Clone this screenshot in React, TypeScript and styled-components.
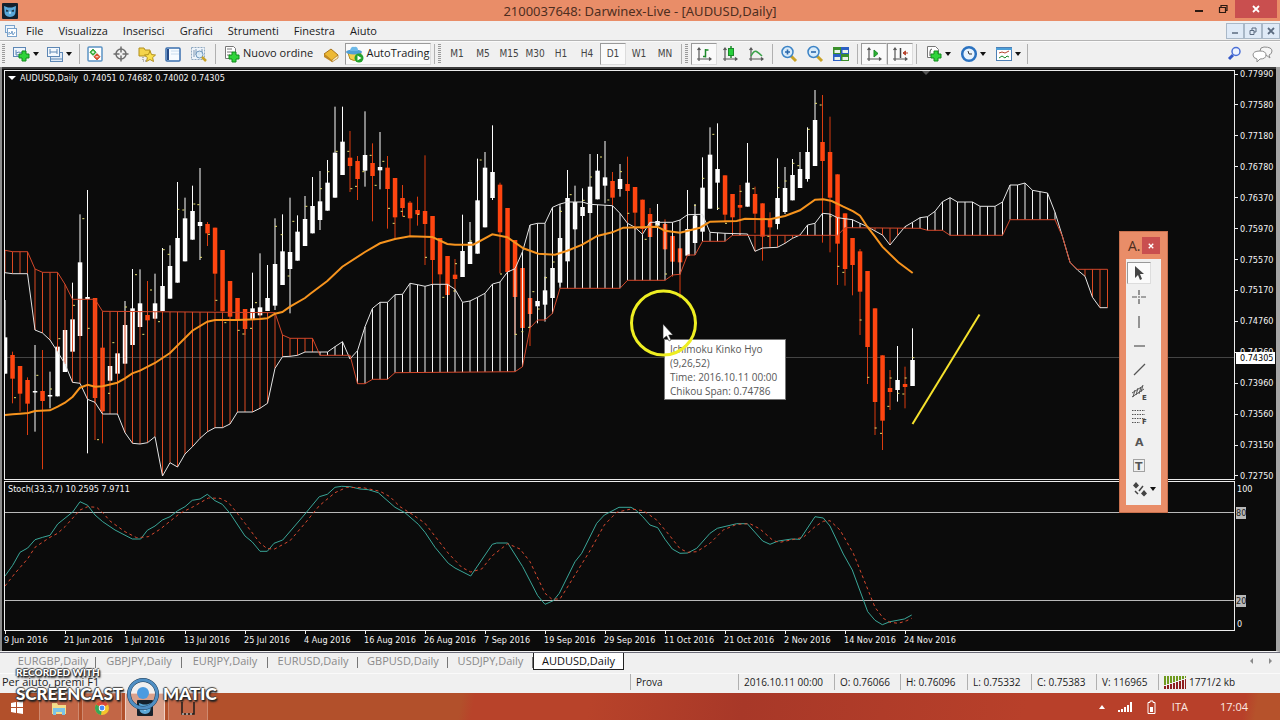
import React from "react";
import styled, { createGlobalStyle, css } from "styled-components";

const ui = `"Open Sans", "Noto Sans", sans-serif`;
const tiny = `"DejaVu Sans Condensed", "DejaVu Sans", sans-serif`;

const Global = createGlobalStyle`
  * { box-sizing: border-box; }
  body { margin: 0; background: #0b0b0b; font-family: ${ui}; }
  button { font-family: inherit; margin: 0; padding: 0; border: 0; background: none; color: inherit; }
  svg { display: block; }
`;

/* ---------- series, in thirds of a pixel, one bar every 7.5 px ---------- */

const STEP = 7.5;

// high, body top, body bottom, low, bull
const candles: [number, number, number, number, 0 | 1][] = [
  [630, 742, 851, 851, 1], [785, 795, 866, 940, 0], [828, 828, 911, 965, 0], [862, 870, 941, 1035, 0],
  [765, 903, 907, 1025, 1], [780, 903, 933, 1138, 0], [845, 915, 919, 955, 1], [770, 770, 919, 919, 1],
  [720, 720, 846, 846, 1], [578, 688, 785, 785, 1], [373, 517, 738, 738, 1], [300, 621, 627, 1090, 1],
  [624, 624, 924, 1050, 0], [773, 773, 964, 1060, 0], [828, 828, 872, 872, 1], [755, 790, 851, 851, 1],
  [633, 705, 821, 821, 1], [537, 655, 765, 765, 1], [538, 640, 711, 711, 1], [573, 675, 691, 691, 0],
  [551, 640, 686, 686, 1], [474, 588, 663, 663, 1], [466, 528, 626, 626, 1], [276, 444, 578, 578, 1],
  [323, 385, 514, 514, 1], [287, 363, 449, 449, 1], [234, 396, 408, 510, 1], [396, 402, 430, 468, 0],
  [413, 413, 551, 663, 0], [480, 480, 664, 664, 0], [573, 573, 680, 680, 0], [624, 624, 690, 690, 0],
  [657, 657, 717, 735, 0], [548, 655, 688, 688, 1], [490, 652, 676, 676, 1], [525, 624, 663, 663, 1],
  [385, 522, 647, 660, 1], [373, 484, 585, 585, 1], [323, 486, 537, 670, 1], [376, 425, 512, 512, 1],
  [318, 387, 468, 468, 1], [261, 348, 430, 430, 1], [243, 334, 390, 420, 1], [210, 278, 362, 362, 1],
  [50, 188, 323, 323, 1], [50, 155, 255, 255, 1], [123, 203, 228, 306, 0], [198, 213, 267, 330, 0],
  [64, 195, 242, 290, 1], [160, 219, 258, 394, 0], [126, 231, 241, 298, 1], [198, 233, 297, 416, 0],
  [264, 264, 382, 448, 0], [285, 324, 354, 380, 0], [333, 338, 385, 440, 0], [320, 360, 373, 407, 0],
  [196, 363, 402, 525, 0], [378, 378, 510, 585, 0], [444, 444, 553, 583, 0], [498, 498, 615, 628, 0],
  [507, 554, 567, 605, 0], [374, 483, 561, 561, 1], [396, 456, 522, 522, 1], [206, 331, 491, 491, 1],
  [186, 233, 412, 412, 1], [106, 246, 324, 330, 1], [278, 284, 427, 550, 0], [354, 354, 546, 546, 0],
  [450, 450, 621, 735, 0], [534, 534, 714, 720, 0], [624, 624, 672, 768, 0], [603, 633, 649, 700, 1],
  [560, 601, 644, 695, 1], [490, 534, 624, 670, 1], [350, 444, 578, 590, 1], [240, 324, 514, 514, 1],
  [287, 336, 418, 418, 1], [295, 351, 378, 378, 1], [192, 290, 369, 369, 1], [192, 242, 328, 328, 1],
  [153, 262, 287, 340, 1], [246, 273, 323, 345, 0], [222, 267, 297, 320, 1], [200, 282, 303, 400, 0],
  [291, 291, 368, 420, 0], [329, 329, 417, 430, 0], [354, 372, 441, 441, 0], [342, 393, 407, 407, 1],
  [388, 402, 478, 478, 0], [423, 438, 515, 560, 0], [475, 475, 517, 625, 0], [300, 417, 497, 497, 1],
  [342, 377, 459, 459, 1], [202, 293, 425, 425, 1], [112, 194, 356, 356, 1], [100, 237, 278, 360, 1],
  [256, 256, 374, 397, 0], [312, 312, 382, 430, 0], [285, 345, 353, 435, 0], [159, 278, 350, 350, 1],
  [290, 312, 371, 430, 0], [340, 340, 440, 512, 0], [367, 390, 412, 470, 0], [205, 324, 402, 418, 1],
  [231, 294, 366, 372, 1], [207, 255, 331, 331, 1], [186, 237, 294, 294, 1], [112, 186, 267, 275, 1],
  [0, 90, 228, 228, 1], [15, 156, 213, 458, 0], [80, 186, 323, 487, 0], [253, 253, 461, 585, 0],
  [370, 370, 537, 587, 0], [444, 444, 525, 616, 0], [477, 484, 605, 735, 0], [543, 543, 771, 882, 0],
  [655, 655, 936, 1035, 0], [796, 796, 992, 1080, 0], [840, 894, 906, 960, 0], [768, 870, 900, 935, 1],
  [830, 882, 891, 955, 0], [715, 810, 888, 888, 1],
];

type Pt = [number, number];

const spanA: Pt[] = [
  [0, 548], [1, 551], [3, 551], [4, 720], [5, 729], [6, 750], [7, 785], [8, 822], [9, 877], [10, 880], [11, 928],
  [12, 937], [13, 972], [15, 972], [16, 1028], [17, 1060], [18, 1062], [19, 1058], [20, 1040], [21, 1158],
  [22, 1118], [23, 1131], [24, 1092], [25, 1070], [26, 1045], [27, 1025], [28, 1013], [29, 1013], [30, 1002],
  [31, 966], [33, 966], [34, 955], [35, 940], [36, 835], [37, 800], [38, 799], [39, 796], [40, 786], [43, 786],
  [44, 770], [45, 755], [46, 807], [47, 782], [48, 710], [49, 655], [50, 637], [51, 637], [52, 614], [53, 613],
  [54, 580], [55, 584], [56, 589], [57, 583], [59, 583], [60, 598], [61, 637], [62, 633], [63, 622], [64, 610],
  [65, 582], [66, 576], [67, 546], [68, 536], [69, 485], [70, 405], [71, 400], [72, 400], [73, 352], [74, 342],
  [75, 336], [77, 336], [78, 343], [81, 347], [82, 370], [83, 400], [84, 412], [85, 433], [86, 397], [89, 397],
  [90, 390], [91, 374], [93, 373], [94, 427], [96, 430], [99, 432], [100, 484], [101, 474], [103, 472], [104, 460],
  [105, 445], [106, 435], [107, 405], [108, 400], [109, 370], [110, 372], [111, 383], [112, 386], [113, 389],
  [114, 400], [115, 410], [116, 423], [117, 435], [118, 465], [119, 437], [120, 410], [121, 397], [122, 383],
  [123, 380], [124, 364], [125, 335], [126, 323], [127, 336], [129, 336], [130, 349], [132, 349], [133, 336],
  [134, 285], [135, 285], [136, 279], [137, 301], [139, 309], [140, 367], [141, 440], [142, 517], [143, 540],
  [144, 559], [145, 622], [146, 653], [147, 653],
];

const spanB: Pt[] = [
  [0, 481], [1, 485], [3, 485], [4, 537], [5, 547], [7, 547], [8, 583], [9, 628], [12, 628], [13, 664], [36, 668],
  [37, 735], [38, 745], [41, 745], [42, 796], [46, 796], [47, 881], [48, 881], [49, 868], [51, 868], [52, 848],
  [68, 845], [69, 830], [70, 714], [71, 690], [72, 690], [73, 670], [74, 595], [82, 595], [83, 571], [88, 571],
  [89, 555], [90, 553], [91, 495], [92, 495], [93, 454], [96, 454], [97, 436], [111, 436], [112, 413], [122, 415],
  [123, 421], [125, 421], [126, 436], [133, 436], [134, 389], [140, 389], [141, 440], [142, 517], [143, 538],
  [147, 538],
];

const average: Pt[] = [
  [15, 975], [38, 973], [60, 971], [85, 969], [105, 963], [150, 961], [173, 950], [195, 938], [218, 920],
  [240, 893], [263, 884], [285, 890], [308, 889], [352, 878], [375, 865], [397, 850], [420, 842], [465, 819],
  [510, 789], [577, 722], [622, 695], [645, 690], [712, 690], [780, 687], [802, 685], [825, 671], [847, 666],
  [870, 650], [915, 624], [930, 612], [982, 573], [1027, 530], [1095, 486], [1140, 460], [1185, 447], [1230, 439],
  [1297, 441], [1342, 462], [1365, 464], [1420, 464], [1477, 433], [1522, 442], [1570, 475], [1615, 491],
  [1665, 494], [1702, 482], [1747, 464], [1792, 438], [1837, 427], [1870, 413], [1972, 410], [1995, 422],
  [2040, 428], [2100, 413], [2130, 395], [2210, 393], [2235, 386], [2310, 388], [2355, 378], [2400, 361],
  [2445, 329], [2470, 328], [2495, 333], [2530, 350], [2560, 364], [2580, 377], [2602, 410], [2625, 440],
  [2647, 470], [2695, 517], [2738, 549],
];

const lagging: Pt[] = [
  [45, 923], [112, 856], [153, 897], [178, 746], [222, 646], [250, 386], [266, 715], [294, 1049], [327, 910],
  [340, 758], [378, 651], [408, 554], [430, 733], [453, 600], [477, 695], [491, 479], [506, 493], [535, 358],
  [550, 360], [583, 342], [595, 344], [603, 502], [627, 433], [649, 631], [676, 698], [716, 721], [730, 732],
  [753, 715], [768, 638], [828, 409], [845, 434], [866, 558], [880, 394], [919, 349], [963, 296], [985, 245],
  [1010, 184], [1045, 184], [1054, 296], [1068, 289], [1090, 245], [1112, 196], [1127, 286], [1150, 214],
  [1167, 355], [1181, 400], [1205, 364], [1212, 379], [1255, 373], [1278, 502], [1330, 622], [1368, 521],
  [1363, 603], [1413, 453], [1442, 210], [1503, 552], [1548, 733], [1567, 725], [1587, 712], [1600, 605],
  [1616, 657], [1638, 563], [1661, 516], [1683, 364], [1712, 314], [1751, 331], [1773, 261], [1803, 201],
  [1825, 330], [1863, 245], [1885, 370], [1937, 448], [1970, 405], [1998, 552], [2085, 346], [2110, 265],
  [2140, 133], [2155, 355], [2178, 400], [2222, 304], [2260, 296], [2305, 439], [2335, 293], [2357, 273],
  [2380, 220], [2395, 227], [2426, 118], [2448, 40], [2462, 45], [2492, 380], [2515, 529], [2530, 547],
  [2582, 690], [2605, 862], [2627, 1014], [2643, 1030], [2672, 864], [2665, 949], [2695, 910], [2717, 864],
  [2710, 912], [2740, 803],
];

const stochMain: Pt[] = [
  [15, 288], [38, 256], [60, 217], [83, 204], [105, 179], [128, 172], [150, 166], [173, 132], [218, 96], [240, 65],
  [263, 76], [285, 105], [308, 125], [345, 150], [397, 177], [422, 177], [442, 151], [465, 138], [487, 120],
  [510, 110], [533, 92], [555, 80], [577, 61], [600, 57], [622, 43], [645, 62], [667, 73], [690, 100], [735, 168],
  [757, 186], [780, 214], [802, 214], [822, 190], [848, 180], [915, 102], [958, 50], [982, 43], [1005, 22],
  [1025, 19], [1050, 20], [1080, 27], [1105, 29], [1135, 38], [1185, 82], [1215, 98], [1255, 133], [1275, 157],
  [1305, 202], [1345, 250], [1365, 264], [1412, 288], [1477, 193], [1490, 189], [1523, 189], [1568, 260],
  [1613, 347], [1635, 373], [1660, 362], [1678, 340], [1725, 245], [1745, 220], [1790, 130], [1813, 105],
  [1857, 82], [1893, 82], [1907, 90], [1928, 110], [1950, 135], [1973, 143], [1995, 178], [2017, 207],
  [2040, 220], [2063, 219], [2090, 205], [2130, 160], [2152, 145], [2210, 131], [2242, 131], [2288, 183],
  [2310, 193], [2335, 183], [2375, 177], [2400, 178], [2445, 110], [2470, 114], [2490, 138], [2530, 222],
  [2557, 270], [2603, 395], [2625, 421], [2647, 434], [2670, 425], [2713, 417], [2735, 405],
];

const stochSignal: Pt[] = [
  [15, 318], [45, 280], [83, 236], [105, 202], [150, 172], [173, 160], [195, 140], [240, 90], [263, 80], [290, 82],
  [310, 100], [330, 123], [375, 155], [410, 173], [445, 170], [480, 148], [540, 100], [580, 80], [625, 54],
  [660, 55], [685, 67], [712, 100], [735, 130], [780, 189], [800, 205], [822, 208], [870, 182], [915, 130],
  [958, 77], [1005, 38], [1040, 22], [1090, 23], [1140, 34], [1170, 50], [1200, 80], [1240, 105], [1275, 130],
  [1345, 220], [1385, 262], [1412, 276], [1445, 267], [1477, 227], [1523, 191], [1560, 207], [1590, 245],
  [1635, 340], [1655, 357], [1680, 357], [1725, 285], [1770, 212], [1813, 135], [1850, 97], [1893, 87],
  [1930, 92], [1970, 120], [2010, 168], [2040, 206], [2063, 217], [2090, 215], [2130, 190], [2170, 150],
  [2210, 133], [2250, 131], [2280, 147], [2320, 182], [2340, 187], [2410, 172], [2445, 140], [2470, 124],
  [2490, 122], [2520, 150], [2560, 220], [2600, 320], [2625, 382], [2650, 415], [2670, 427], [2695, 430],
  [2720, 422], [2735, 415],
];

const priceY = (v: number) => 19 + v / 3;
const stochY = (v: number) => v / 3 - 2;
const timeX = (v: number) => v / 3 - 5;

const path = (pts: Pt[], fx: (v: number) => number, fy: (v: number) => number) =>
  pts.map(([a, b]) => `${fx(a).toFixed(1)},${fy(b).toFixed(1)}`).join(" ");

const at = (pts: Pt[], i: number) => {
  for (let k = 1; k < pts.length; k++) {
    const [x0, y0] = pts[k - 1];
    const [x1, y1] = pts[k];
    if (i <= x1) return y0 + ((y1 - y0) * (i - x0)) / (x1 - x0);
  }
  return pts[pts.length - 1][1];
};

const bars = Array.from({ length: 148 }, (_, i) => i);

/* ---------- window chrome ---------- */

const Window = styled.div`
  min-height: 100vh;
  display: flex;
  flex-direction: column;
  position: relative;
  overflow: hidden;
  background: #f0f0f0;
  color: #1b1b1b;
`;

const TitleBar = styled.header`
  height: 21px;
  display: grid;
  grid-template-columns: 1fr auto 1fr;
  align-items: start;
  background: #e98d68;
`;

const Logo = styled.div`
  padding: 3px 2px;
`;

const Title = styled.h1`
  margin: 0;
  font-family: "Noto Sans", sans-serif;
  font-size: 13px;
  line-height: 22px;
  font-weight: 400;
  color: #4e2d1f;
`;

const WindowButtons = styled.div`
  display: flex;
  justify-content: flex-end;
  padding-right: 3px;
`;

const WindowButton = styled.button<{ $danger?: boolean }>`
  width: ${(p) => (p.$danger ? 42 : 24)}px;
  height: 18px;
  display: grid;
  place-items: center;
  background: ${(p) => (p.$danger ? "#c94f4f" : "transparent")};
`;

const MenuBar = styled.nav`
  height: 20px;
  display: flex;
  align-items: center;
  gap: 15px;
  padding-left: 4px;
  border-bottom: 1px solid #b4b4b4;
  font-size: 11px;
`;

const MenuItem = styled.button`
  line-height: 18px;
  font-size: 11px;
  white-space: nowrap;
`;

const MenuIcon = styled.span`
  width: 14px;
  margin-right: -7px;
`;

const MdiButtons = styled.div`
  margin-left: auto;
  display: flex;
`;

const MdiButton = styled.button`
  width: 18px;
  height: 16px;
  display: grid;
  place-items: center;
  background: #dfeaf7;
  border: 1px solid #a9b8c8;
`;

const Toolbar = styled.div`
  height: 26px;
  display: flex;
  align-items: center;
  padding: 0 3px 1px 2px;
  border-top: 1px solid #fafafa;
`;

const Grip = styled.span`
  width: 3px;
  height: 20px;
  margin-right: 3px;
  flex: none;
  background: repeating-linear-gradient(#9a9a9a 0 1px, #f0f0f0 1px 2px);
`;

const Divider = styled.span<{ $gap?: number }>`
  width: 1px;
  height: 20px;
  flex: none;
  margin: 0 ${(p) => p.$gap ?? 2}px;
  background: #b0b0b0;
`;

const Tool = styled.button<{ $pressed?: boolean; $w?: number }>`
  width: ${(p) => p.$w ?? 26}px;
  height: 22px;
  flex: none;
  display: flex;
  align-items: center;
  justify-content: center;
  gap: 2px;
  font-size: 11px;
  line-height: 18px;
  white-space: nowrap;
  ${(p) =>
    p.$pressed &&
    css`
      background: #fafafa;
      border: 1px solid #dcdcdc;
      border-top-color: #9a9a9a;
      border-left-color: #9a9a9a;
    `}
`;

const ToolText = styled.span`
  padding-bottom: 2px;
`;

const Period = styled(Tool)`
  font-family: ${tiny};
  font-size: 10px;
  color: #444;
`;

const Caret = styled.span`
  border: 3px solid transparent;
  border-top: 4px solid #111;
  border-bottom: 0;
`;

const Spacer = styled.span`
  flex: 1;
`;

/* ---------- chart ---------- */

const ChartWindow = styled.main`
  flex: 1;
  display: grid;
  grid-template-columns: 1fr 40px;
  padding: 0 1px 1px 4px;
  border-right: 4px solid #a5a5a5;
  border-bottom: 1px solid #f4f4f4;
  background: #0b0b0b;
  box-shadow: inset 3px 0 0 -1px #8b8b8b, inset 0 2px 0 #3c3c3c;
  font-family: ${tiny};
  font-size: 9px;
  line-height: 12px;
  color: #f4f4f4;
`;

const Panes = styled.div`
  min-width: 0;
  padding-top: 3px;
`;

const Pane = styled.section<{ $h: number }>`
  height: ${(p) => p.$h}px;
  margin-bottom: 1px;
  border: 1px solid #ececec;
  position: relative;
  overflow: hidden;
`;

const Plot = styled.svg`
  width: 100%;
  height: 100%;
`;

const PaneTitle = styled.div`
  position: absolute;
  top: 1px;
  left: 3px;
  display: flex;
  align-items: center;
  gap: 4px;
  white-space: pre;
`;

const TitleCaret = styled.span`
  border: 4px solid transparent;
  border-top: 4px solid #fff;
  border-bottom: 0;
`;

const TimeAxis = styled.div`
  display: flex;
  height: 18px;
`;

const TimeLabel = styled.div`
  width: 60px;
  flex: none;
  white-space: nowrap;
  &::before {
    content: "";
    display: block;
    width: 1px;
    height: 3px;
    margin: -1px 0 0 1px;
    background: #eee;
  }
`;

const Axis = styled.aside`
  position: relative;
  padding-top: 1px;
`;

const Prices = styled.div`
  height: 414px;
  display: flex;
  flex-direction: column;
  justify-content: space-between;
`;

const Price = styled.div`
  display: flex;
  align-items: center;
  gap: 2px;
  &::before {
    content: "";
    width: 3px;
    height: 1px;
    background: #eee;
  }
`;

const CurrentPrice = styled.div`
  position: absolute;
  top: 285px;
  left: 1px;
  right: 0;
  padding-left: 4px;
  background: #fff;
  color: #000;
`;

const Levels = styled.div`
  display: flex;
  flex-direction: column;
  align-items: flex-start;
  padding: 1px 0 0 1px;
`;

const Level = styled.div<{ $boxed?: boolean; $gap?: number }>`
  margin-top: ${(p) => p.$gap ?? 0}px;
  padding: 0 1px;
  height: 12px;
  ${(p) => p.$boxed && "background: #b9b9b9; color: #222; padding: 0;"}
`;

/* ---------- bottom bars ---------- */

const Tabs = styled.div`
  height: 21px;
  display: flex;
  align-items: flex-start;
  padding-left: 10px;
  border-top: 1px solid #6c6c78;
`;

const Tab = styled.button<{ $active?: boolean; $w: number }>`
  width: ${(p) => p.$w}px;
  height: 17px;
  line-height: 14px;
  padding-bottom: 1px;
  font-size: 11px;
  color: ${(p) => (p.$active ? "#111" : "#8a8a8a")};
  ${(p) =>
    p.$active
      ? "background: #fff; border: 1px solid #222; border-top: 0;"
      : "background: linear-gradient(#777, #777) right 4px / 1px 11px no-repeat;"}
`;

const TabArrows = styled.div`
  margin-left: auto;
  display: flex;
  gap: 12px;
  padding: 4px 5px 0 0;
`;

const ArrowButton = styled.button`
  width: 7px;
  height: 8px;
`;

const StatusBar = styled.footer`
  height: 20px;
  display: flex;
  align-items: center;
  padding: 0 0 3px 2px;
  font-size: 11px;
  line-height: 16px;
  border-top: 1px solid #fafafa;
`;

const Help = styled.span`
  flex: 1;
`;

const Cell = styled.span<{ $w: number }>`
  width: ${(p) => p.$w}px;
  flex: none;
  display: flex;
  align-items: center;
  gap: 3px;
  padding-left: 5px;
  border-left: 1px solid #b0b0b0;
  white-space: nowrap;
  font-size: 10px;
`;

const Taskbar = styled.div`
  height: 28px;
  display: flex;
  align-items: stretch;
  gap: 3px;
  padding: 0 32px 0 10px;
  color: #fbe9e2;
  background: linear-gradient(100deg, #b2502b 0 36%, #b8432a 37% 46%, #a83828 58%, #b8402a 80%, #b8402a 97%, #b6522b 98%);
`;

const StartButton = styled.button`
  width: 26px;
  display: grid;
  place-items: center start;
`;

const TaskButton = styled.button<{ $active?: boolean }>`
  width: 40px;
  display: grid;
  place-items: center;
  background: ${(p) => (p.$active ? "#d9a18c" : "#c26646")};
  border: 1px solid ${(p) => (p.$active ? "#f0d0c4" : "#cf8a70")};
  border-bottom: 0;
`;

const Tray = styled.div`
  margin-left: auto;
  display: flex;
  align-items: center;
  padding-bottom: 1px;
  font-size: 11px;
`;

const TrayItem = styled.span<{ $gap: number }>`
  margin-left: ${(p) => p.$gap}px;
`;

/* ---------- floating items ---------- */

const Tooltip = styled.div`
  position: absolute;
  left: 664px;
  top: 339px;
  width: 122px;
  padding: 2px 0 1px 5px;
  background: #fff;
  border: 1px solid #767676;
  color: #575757;
  font-size: 10px;
  line-height: 14px;
  white-space: nowrap;
`;

const Pointer = styled.svg`
  position: absolute;
  left: 628px;
  top: 287px;
`;

const Palette = styled.section`
  position: absolute;
  right: 112px;
  top: 231px;
  width: 49px;
  padding: 5px 6px 7px;
  background: #e98d68;
  border: 1px solid #c9714e;
`;

const PaletteHead = styled.div`
  display: flex;
  justify-content: space-between;
  align-items: center;
  height: 17px;
  margin-bottom: 5px;
  padding: 0 1px 0 2px;
  font-size: 14px;
  color: #4e2d1f;
`;

const PaletteClose = styled.button`
  width: 18px;
  height: 17px;
  display: grid;
  place-items: center;
  background: #c94f4f;
`;

const PaletteBody = styled.div`
  height: 246px;
  display: flex;
  flex-direction: column;
  gap: 2px;
  padding: 3px 1px 1px;
  background: #f0f0f0;
`;

const PaletteTool = styled.button<{ $pressed?: boolean }>`
  width: ${(p) => (p.$pressed ? 24 : 33)}px;
  height: 22px;
  padding-left: 3px;
  display: flex;
  align-items: center;
  gap: 2px;
  ${(p) => p.$pressed && "background: #fbfbfb; border: 1px solid #ddd; border-top-color: #999; border-left-color: #999; padding-left: 2px;"}
`;

const Watermark = styled.div`
  position: absolute;
  left: 16px;
  bottom: 11px;
  color: #fff;
  font-family: Lato, sans-serif;
  font-weight: 900;
  text-shadow: 1px 1px 1px #222, -1px 0 1px #444, 0 -1px 1px #444, 1px 2px 2px #222;
`;

const MarkTop = styled.div`
  font-size: 10px;
  line-height: 12px;
`;

const MarkRow = styled.div`
  display: flex;
  align-items: center;
  gap: 4px;
  height: 32px;
  font-size: 17px;
  line-height: 18px;
`;

/* ---------- drawings ---------- */

const Icon = ({ children, w = 18, h = 18 }: { children: React.ReactNode; w?: number; h?: number }) => (
  <svg width={w} height={h} viewBox={`0 0 ${w} ${h}`} fill="none" aria-hidden="true">
    {children}
  </svg>
);

const Plus = ({ x, y }: { x: number; y: number }) => (
  <path
    d={`M${x + 3} ${y}h4v3h3v4h-3v3h-4v-3h-3v-4h3z`}
    fill="#2fd43a"
    stroke="#128a1c"
    strokeWidth="1"
  />
);

const NewChart = () => (
  <Icon w={20}>
    <rect x="2.5" y="2.5" width="12" height="9" fill="#eef5fc" stroke="#5d87b5" />
    <path d="M5 5v5h7M5 8l3-1 2 1 3-2" stroke="#5d87b5" />
    <Plus x={8} y={6} />
  </Icon>
);
const Profiles = () => (
  <Icon>
    <rect x="4.5" y="7.5" width="12" height="9" fill="#dfeaf6" stroke="#5d87b5" />
    <path d="M4 14h13" stroke="#5d87b5" />
    <rect x="1.5" y="2.5" width="12" height="9" fill="#f4f9fe" stroke="#5d87b5" />
    <path d="M4 4v5M11 4v5M4 7h7" stroke="#5d87b5" />
  </Icon>
);
const MarketWatch = () => (
  <Icon>
    <rect x="2" y="2" width="14" height="14" rx="1" fill="#fff" stroke="#5b93c4" strokeWidth="1.5" />
    <path d="M7 4l3.200 3.200L7 10.400 3.800 7.200z" fill="#27b32d" stroke="#187a1e" strokeWidth=".6" />
    <path d="M11 8.600l3.200 3.200L11 15l-3.200-3.200z" fill="#e2512a" stroke="#a83317" strokeWidth=".6" />
    <path d="M7 5.800v2.800M5.600 7.200h2.800M9.600 11.800h2.800" stroke="#fff" />
  </Icon>
);
const Crosshair = () => (
  <Icon>
    <circle cx="9" cy="9" r="5" stroke="#6d6d6d" strokeWidth="1.5" />
    <path d="M9 1.500v6M9 10.500v6M1.500 9h6M10.500 9h6" stroke="#6d6d6d" strokeWidth="1.5" />
  </Icon>
);
const Navigator = () => (
  <Icon>
    <path d="M1 3h5l1 2h5v6H1z" fill="#f4d44c" stroke="#b18f1c" />
    <path d="M5 12v4h4" stroke="#777" strokeDasharray="1 1" />
    <path d="M12 6l1.600 3.600 3.900.4-2.900 2.600.9 3.900-3.500-2-3.500 2 .9-3.900-2.900-2.600 3.900-.4z" fill="#fbe04e" stroke="#b18f1c" />
  </Icon>
);
const Terminal = () => (
  <Icon>
    <rect x="2" y="3" width="14" height="13" rx="1" fill="#f7fbff" stroke="#3a6fae" strokeWidth="1.5" />
    <path d="M4 4v11" stroke="#244a86" strokeWidth="2" />
    <path d="M7 6h8M7 9h8" stroke="#c9dcee" />
  </Icon>
);
const Tester = () => (
  <Icon>
    <rect x="1.5" y="2.5" width="13" height="12" fill="#eef4fa" stroke="#8fa8c0" strokeDasharray="2 1" />
    <path d="M4 5v7M6 4v6M9 6v4M12 4v5" stroke="#7d97b3" />
    <circle cx="9.5" cy="9.5" r="3.5" fill="#dcecf8" fillOpacity=".8" stroke="#6d96bd" />
    <path d="M12 12l4 4" stroke="#c9a227" strokeWidth="2.5" />
  </Icon>
);
const NewOrder = () => (
  <Icon>
    <path d="M2.500 1.500h8l2 2v10h-10z" fill="#fff" stroke="#777" />
    <path d="M4 4h5M4 7h5M4 10h3" stroke="#777" />
    <Plus x={6} y={7} />
  </Icon>
);
const MetaEditor = () => (
  <Icon>
    <path d="M2 9l7-5 7 6-6 6z" fill="#edb934" stroke="#a9741b" />
    <path d="M2 9v3l8 5v-2z" fill="#c28a22" />
    <path d="M10 15l6-5v3l-6 4z" fill="#fff2c5" stroke="#a9741b" strokeWidth=".7" />
  </Icon>
);
const AutoTrade = () => (
  <Icon>
    <path d="M2 8h13l-2 6q-5 3-9 0z" fill="#f3cf4c" stroke="#b38d22" />
    <ellipse cx="8" cy="7" rx="8" ry="2.5" fill="#4f9fd6" />
    <path d="M4 6q1-5 4-4 4-1 4 4z" fill="#6db9e8" />
    <circle cx="13" cy="13" r="4.5" fill="#22a32c" />
    <path d="M11.500 10.500l4 2.500-4 2.500z" fill="#fff" />
  </Icon>
);

const AxesBase = () => (
  <path d="M4 3v13M2 14h14M2.500 5L4 3l1.500 2M14 12.500l2 1.500-2 1.500" stroke="#555" strokeWidth="1.2" />
);
const BarChart = () => (
  <Icon>
    <AxesBase />
    <path d="M10.500 4v8.500M10.500 11.500H8M10.500 5h3" stroke="#1c8a2a" strokeWidth="1.5" />
  </Icon>
);
const CandleChart = () => (
  <Icon>
    <AxesBase />
    <path d="M10 1v12" stroke="#1c8a2a" strokeWidth="1.5" />
    <rect x="7.5" y="3.5" width="5" height="7" fill="#27cf3c" stroke="#1c8a2a" />
  </Icon>
);
const LineChart = () => (
  <Icon>
    <AxesBase />
    <path d="M4 11q3-6 5.500-4.500T15 11" stroke="#3aa24a" strokeWidth="1.5" />
  </Icon>
);
const Zoom = ({ minus }: { minus?: boolean }) => (
  <Icon>
    <path d="M11 11l5 5" stroke="#c9a227" strokeWidth="3" />
    <circle cx="7.5" cy="7" r="5.5" fill="#d8ebfa" stroke="#3d84c6" strokeWidth="1.5" />
    <path d={minus ? "M5 7h5" : "M5 7h5M7.500 4.500v5"} stroke="#2a68ac" strokeWidth="1.6" />
  </Icon>
);
const Tile = () => (
  <Icon>
    <rect x="1" y="2" width="8" height="7" fill="#3a8f2b" />
    <rect x="9" y="2" width="8" height="7" fill="#2b5fc4" />
    <rect x="1" y="9" width="8" height="7" fill="#2b5fc4" />
    <rect x="9" y="9" width="8" height="7" fill="#3a8f2b" />
    <path d="M2.500 5H8v3H2.500zM10.500 5H16v3h-5.500zM2.500 12H8v3H2.500zM10.500 12H16v3h-5.500z" fill="#eaf3ea" />
  </Icon>
);
const AutoScroll = () => (
  <Icon>
    <AxesBase />
    <path d="M9 5l4 3.500L9 12z" fill="#27b32d" stroke="#1c8a2a" />
  </Icon>
);
const ChartShift = () => (
  <Icon>
    <AxesBase />
    <path d="M9.500 3v10" stroke="#444" strokeWidth="1.5" />
    <path d="M12 8h5M14.500 6v4l-2.500-2z" stroke="#b7442f" fill="#b7442f" />
  </Icon>
);
const Indicators = () => (
  <Icon>
    <path d="M2.500 1.500h8l3 3v8h-11z" fill="#fff" stroke="#777" />
    <path d="M7 4q-2 0-2 3v4" stroke="#555" />
    <Plus x={6} y={6} />
  </Icon>
);
const Clock = () => (
  <Icon>
    <circle cx="9" cy="9" r="6.8" fill="#e9f4fd" stroke="#2b72c0" strokeWidth="2.5" />
    <path d="M8 6l1 3h3" stroke="#333" />
  </Icon>
);
const Templates = () => (
  <Icon>
    <rect x="1.5" y="2.5" width="15" height="13" fill="#fff" stroke="#4d7fb5" />
    <path d="M1 4h16" stroke="#4d9fd8" strokeWidth="2" />
    <path d="M4 8l3-1 3 1 4-2" stroke="#b7442f" />
    <path d="M4 13l3-2 3 2 2-2 2 1" stroke="#1c8a2a" />
  </Icon>
);
const Search = () => (
  <Icon>
    <path d="M3 14l4-4" stroke="#3559c9" strokeWidth="3" />
    <circle cx="10" cy="6.5" r="4" fill="#eef4ff" stroke="#4a6fd6" strokeWidth="1.5" />
  </Icon>
);
const Chat = () => (
  <Icon w={22}>
    <path d="M12 2q8 0 8 4 0 3-3 4l1 3-4-3q-6 0-6-4 0-4 4-4z" fill="#f6f6f6" stroke="#8d8d8d" />
    <path d="M8 6q6 0 6 4t-6 4l-3 3v-3q-4-1-4-4 0-4 7-4z" fill="#fff" stroke="#8d8d8d" />
  </Icon>
);

const Owl = ({ size = 16 }: { size?: number }) => (
  <svg width={size} height={size} viewBox="0 0 16 16" aria-hidden="true">
    <rect width="16" height="16" rx="1" fill="#15212c" />
    <path d="M2 3l4 1.500h4L14 3l-.5 6q0 4.500-5.500 5-5.500-.5-5.500-5z" fill="#5ba8d8" />
    <path d="M4 6.500l3 1.500-2.500 1zM12 6.500L9 8l2.500 1z" fill="#15212c" />
    <path d="M8 8l1 2-1 1-1-1z" fill="#d8eefa" />
  </svg>
);

const Cross = ({ color, size = 8 }: { color: string; size?: number }) => (
  <svg width={size} height={size} viewBox="0 0 8 8" aria-hidden="true">
    <path d="M1 1l6 6M7 1L1 7" stroke={color} strokeWidth="1.8" />
  </svg>
);

const PriceChart = () => (
  <Plot role="img" aria-label="AUDUSD daily candles with Ichimoku cloud">
    <line x1="0" x2="100%" y1="286.5" y2="286.5" stroke="#444" />
    <path d="M917 0h8l-4 4z" fill="#555" />
    {candles.map(([h, t, b, l, up], i) => {
      const c = up ? "#fff" : "#ff4510";
      const x = i * STEP;
      return (
        <g key={i}>
          <line x1={x} x2={x} y1={priceY(h)} y2={priceY(l)} stroke={c} opacity={up ? 1 : 0.85} />
          <rect x={x - 2.2} y={priceY(t)} width="4.5" height={Math.max(1.5, (b - t) / 3)} fill={c} />
        </g>
      );
    })}
    {bars.map((i) => {
      const a = priceY(at(spanA, i));
      const b = priceY(at(spanB, i));
      return <line key={i} x1={i * STEP} x2={i * STEP} y1={a} y2={b} stroke={a < b ? "#f4f4f4" : "#dc4a22"} />;
    })}
    <polyline points={path(spanA, (i) => i * STEP, priceY)} fill="none" stroke="#e4e4e4" />
    <polyline points={path(spanB, (i) => i * STEP, priceY)} fill="none" stroke="#d2472a" />
    {lagging.map(([x, y], i) => (
      <rect key={i} x={timeX(x) - 1} y={priceY(y) - 0.5} width="2" height="1" fill="#e8e070" />
    ))}
    <polyline points={path(average, timeX, priceY)} fill="none" stroke="#f7941e" strokeWidth="2" />
    <line x1="907.5" y1="353" x2="974.5" y2="243.5" stroke="#f6e22c" strokeWidth="2" />
  </Plot>
);

const StochChart = () => (
  <Plot role="img" aria-label="Stochastic oscillator">
    <line x1="0" x2="100%" y1="30.5" y2="30.5" stroke="#b9b9b9" />
    <line x1="0" x2="100%" y1="118.5" y2="118.5" stroke="#b9b9b9" />
    <polyline points={path(stochMain, timeX, stochY)} fill="none" stroke="#3aa698" />
    <polyline points={path(stochSignal, timeX, stochY)} fill="none" stroke="#d9492f" strokeDasharray="3 3" />
  </Plot>
);

const paletteTools: { name: string; art: React.ReactNode; menu?: boolean }[] = [
  { name: "Cursore", art: <path d="M5 2v12l3-3 2 5 2-1-2-5h4z" fill="#444" /> },
  { name: "Mirino", art: <path d="M9 2v5M9 11v5M2 9h5M11 9h5M8 9h2" stroke="#555" strokeWidth="1.2" /> },
  { name: "Linea verticale", art: <path d="M9 4v12" stroke="#555" strokeWidth="1.2" /> },
  { name: "Linea orizzontale", art: <path d="M4 10h11" stroke="#555" strokeWidth="1.2" /> },
  { name: "Linea di tendenza", art: <path d="M4 15L15 4" stroke="#555" strokeWidth="1.2" /> },
  {
    name: "Canale",
    art: (
      <>
        <path d="M2 9l11-7M2 13l12-8M5 6l-2 7M8 4L6 11M11 3L9 10M13 1l-2 7" stroke="#555" />
        <text x="12" y="16" fontSize="7" fontFamily="DejaVu Sans" fontWeight="700" fill="#444">E</text>
      </>
    ),
  },
  {
    name: "Fibonacci",
    art: (
      <>
        <path d="M2 2.500h13M2 6.500h13M2 10.500h13M2 14.500h8" stroke="#555" strokeDasharray="1.5 1" />
        <text x="12" y="16" fontSize="7" fontFamily="DejaVu Sans" fontWeight="700" fill="#444">F</text>
      </>
    ),
  },
  { name: "Testo", art: <text x="5" y="14" fontSize="11" fontFamily="DejaVu Sans" fontWeight="700" fill="#555">A</text> },
  {
    name: "Etichetta",
    art: (
      <>
        <rect x="3.5" y="3.5" width="11" height="12" stroke="#555" strokeDasharray="1 1" />
        <text x="5" y="14" fontSize="11" fontFamily="DejaVu Sans" fontWeight="700" fill="#555">T</text>
      </>
    ),
  },
  {
    name: "Frecce",
    menu: true,
    art: (
      <>
        <path d="M6 2l3 3.500-3 3-3-3zM14 10l3 3.500-3 3-3-3z" fill="#444" />
        <path d="M5 11l3 3M9 11l4-5" stroke="#444" strokeWidth="1.5" />
      </>
    ),
  },
];

const menus = ["File", "Visualizza", "Inserisci", "Grafici", "Strumenti", "Finestra", "Aiuto"];
const periods = ["M1", "M5", "M15", "M30", "H1", "H4", "D1", "W1", "MN"];
const prices = [
  "0.77990", "0.77580", "0.77180", "0.76780", "0.76370", "0.75970", "0.75570",
  "0.75170", "0.74760", "0.74360", "0.73960", "0.73560", "0.73150", "0.72750",
];
const dates = [
  "9 Jun 2016", "21 Jun 2016", "1 Jul 2016", "13 Jul 2016", "25 Jul 2016", "4 Aug 2016", "16 Aug 2016", "26 Aug 2016",
  "7 Sep 2016", "19 Sep 2016", "29 Sep 2016", "11 Oct 2016", "21 Oct 2016", "2 Nov 2016", "14 Nov 2016", "24 Nov 2016",
];
const tabs: [string, number][] = [
  ["EURGBP,Daily", 86], ["GBPJPY,Daily", 86], ["EURJPY,Daily", 86], ["EURUSD,Daily", 90],
  ["GBPUSD,Daily", 90], ["USDJPY,Daily", 85], ["AUDUSD,Daily", 91],
];
const cells: [string, number][] = [
  ["Prova", 108], ["2016.10.11 00:00", 96], ["O: 0.76066", 66], ["H: 0.76096", 67], ["L: 0.75332", 64],
  ["C: 0.75383", 65], ["V: 116965", 62],
];

export default function App() {
  return (
    <>
      <Global />
      <Window>
        <TitleBar>
          <Logo><Owl /></Logo>
          <Title>2100037648: Darwinex-Live - [AUDUSD,Daily]</Title>
          <WindowButtons>
            <WindowButton aria-label="Riduci a icona">
              <Icon w={10} h={10}><path d="M1 7h8" stroke="#2b1a12" strokeWidth="2" /></Icon>
            </WindowButton>
            <WindowButton aria-label="Ripristina">
              <Icon w={10} h={10}><path d="M1.500 3.500h6v5h-6zM3 3.500v-2h6v5h-1.500" stroke="#2b1a12" strokeWidth="1.2" /></Icon>
            </WindowButton>
            <WindowButton $danger aria-label="Chiudi"><Cross color="#fff" /></WindowButton>
          </WindowButtons>
        </TitleBar>

        <MenuBar>
          <MenuIcon>
            <Icon w={14} h={14}>
              <rect x="1.5" y="1.5" width="9" height="7" fill="#eef5fc" stroke="#7aa3cc" />
              <rect x="3.5" y="4.5" width="9" height="8" fill="#fff" stroke="#7aa3cc" />
              <path d="M5 11V8l2 2 1-3 1 4 2-3" stroke="#7aa3cc" />
            </Icon>
          </MenuIcon>
          {menus.map((m) => <MenuItem key={m}>{m}</MenuItem>)}
          <MdiButtons>
            <MdiButton aria-label="Riduci grafico"><Icon w={8} h={8}><path d="M1 6h6" stroke="#5b6b80" strokeWidth="1.5" /></Icon></MdiButton>
            <MdiButton aria-label="Ripristina grafico"><Icon w={8} h={8}><path d="M1 3.500h4v4h-4zM3 3V1h4v4H5" stroke="#5b6b80" /></Icon></MdiButton>
            <MdiButton aria-label="Chiudi grafico"><Cross color="#5b6b80" /></MdiButton>
          </MdiButtons>
        </MenuBar>

        <Toolbar>
          <Grip />
          <Tool $w={33} aria-label="Nuovo grafico"><NewChart /><Caret /></Tool>
          <Tool $w={36} aria-label="Profili"><Profiles /><Caret /></Tool>
          <Divider />
          <Tool aria-label="Market Watch"><MarketWatch /></Tool>
          <Tool aria-label="Finestra dati"><Crosshair /></Tool>
          <Tool aria-label="Navigatore"><Navigator /></Tool>
          <Tool aria-label="Terminale"><Terminal /></Tool>
          <Tool aria-label="Tester strategie"><Tester /></Tool>
          <Divider $gap={3} />
          <Tool $w={98}><NewOrder /><ToolText>Nuovo ordine</ToolText></Tool>
          <Tool $w={28} aria-label="MetaEditor"><MetaEditor /></Tool>
          <Tool $w={86} $pressed aria-pressed="true"><AutoTrade /><ToolText>AutoTrading</ToolText></Tool>
          <Divider $gap={3} />
          <Grip />
          {periods.map((p) => <Period key={p} $pressed={p === "D1"} aria-pressed={p === "D1"}>{p}</Period>)}
          <Divider $gap={3} />
          <Grip />
          <Tool $pressed aria-label="Grafico a barre"><BarChart /></Tool>
          <Tool aria-label="Candele"><CandleChart /></Tool>
          <Tool aria-label="Grafico a linee"><LineChart /></Tool>
          <Divider $gap={3} />
          <Tool aria-label="Ingrandisci"><Zoom /></Tool>
          <Tool aria-label="Riduci"><Zoom minus /></Tool>
          <Tool aria-label="Affianca finestre"><Tile /></Tool>
          <Divider $gap={3} />
          <Tool $pressed aria-label="Scorrimento automatico"><AutoScroll /></Tool>
          <Tool $pressed aria-label="Spostamento grafico"><ChartShift /></Tool>
          <Divider $gap={3} />
          <Tool $w={35} aria-label="Indicatori"><Indicators /><Caret /></Tool>
          <Tool $w={35} aria-label="Periodicità"><Clock /><Caret /></Tool>
          <Tool $w={35} aria-label="Modelli"><Templates /><Caret /></Tool>
          <Divider />
          <Spacer />
          <Tool $w={28} aria-label="Cerca"><Search /></Tool>
          <Tool $w={28} aria-label="Community"><Chat /></Tool>
        </Toolbar>

        <ChartWindow>
          <Panes>
            <Pane $h={410}>
              <PriceChart />
              <PaneTitle><TitleCaret />AUDUSD,Daily  0.74051 0.74682 0.74002 0.74305</PaneTitle>
            </Pane>
            <Pane $h={150}>
              <StochChart />
              <PaneTitle>Stoch(33,3,7) 10.2595 7.9711</PaneTitle>
            </Pane>
            <TimeAxis>{dates.map((d) => <TimeLabel key={d}>{d}</TimeLabel>)}</TimeAxis>
          </Panes>
          <Axis>
            <Prices>{prices.map((p) => <Price key={p}>{p}</Price>)}</Prices>
            <CurrentPrice>0.74305</CurrentPrice>
            <Levels>
              <Level>100</Level>
              <Level $boxed $gap={12}>80</Level>
              <Level $boxed $gap={76}>20</Level>
              <Level $gap={11}>0</Level>
            </Levels>
          </Axis>
        </ChartWindow>

        <Tabs>
          {tabs.map(([t, w]) => <Tab key={t} $w={w} $active={t === "AUDUSD,Daily"}>{t}</Tab>)}
          <TabArrows>
            <ArrowButton aria-label="Schede precedenti"><Icon w={5} h={8}><path d="M4 1v6L1 4z" fill="#8a8a8a" /></Icon></ArrowButton>
            <ArrowButton aria-label="Schede successive"><Icon w={5} h={8}><path d="M1 1v6l3-3z" fill="#8a8a8a" /></Icon></ArrowButton>
          </TabArrows>
        </Tabs>

        <StatusBar>
          <Help>Per aiuto, premi F1</Help>
          {cells.map(([t, w]) => <Cell key={t} $w={w}>{t}</Cell>)}
          <Cell $w={122}>
            <Icon w={22} h={13}>
              {Array.from({ length: 8 }, (_, i) => (
                <g key={i}>
                  <rect x={i * 3} y="0" width="2" height={9 - i} fill="#6f9a1e" />
                  <rect x={i * 3} y={10 - i} width="2" height={3 + i} fill="#8e1f1f" />
                </g>
              ))}
            </Icon>
            1771/2 kb
          </Cell>
        </StatusBar>

        <Taskbar>
          <StartButton aria-label="Start">
            <Icon w={14} h={14}><path d="M1 3l5-1v5H1zM7 2l6-1v6H7zM1 8h5v5l-5-1zM7 8h6v6l-6-1z" fill="#fff" /></Icon>
          </StartButton>
          <TaskButton aria-label="Esplora file">
            <Icon><path d="M2 4h5l1 2h8v9H2z" fill="#f3dd8a" /><path d="M3 9h12v7h-3v-3H6v3H3z" fill="#7cc3e6" /></Icon>
          </TaskButton>
          <TaskButton aria-label="Chrome">
            <Icon w={14} h={14}>
              <circle cx="7" cy="7" r="7" fill="#f4c52c" />
              <path d="M7 7L1 3.500A7 7 0 0 1 13 3.500z" fill="#dd4b3a" />
              <path d="M7 7L1 3.500A7 7 0 0 0 6 14z" fill="#3aa757" />
              <circle cx="7" cy="7" r="3.2" fill="#fff" /><circle cx="7" cy="7" r="2.4" fill="#4a8af4" />
            </Icon>
          </TaskButton>
          <TaskButton $active aria-label="MetaTrader"><Owl /></TaskButton>
          <TaskButton aria-label="Registratore">
            <Icon><path d="M3 3v12h12V3" stroke="#1c1c1c" strokeWidth="1.500" /><path d="M3 15h12" stroke="#fff" strokeDasharray="2 2" /></Icon>
          </TaskButton>
          <Tray>
            <Icon w={8} h={8}><path d="M1 6l3-4 3 4z" fill="#fff" /></Icon>
            <TrayItem $gap={12}>
              <Icon w={15} h={12}><path d="M1 11V9M4 11V8M7 11V6M10 11V4M13 11V1" stroke="#fff" strokeWidth="2" /></Icon>
            </TrayItem>
            <TrayItem $gap={14}>
              <Icon w={9} h={14}><path d="M3 1h3v1.500h2v11H1v-11h2z" stroke="#fff" /><path d="M3 7h3v5H3z" fill="#fff" /></Icon>
            </TrayItem>
            <TrayItem $gap={16}>ITA</TrayItem>
            <TrayItem $gap={32}>17:04</TrayItem>
          </Tray>
        </Taskbar>

        <Tooltip role="tooltip">
          Ichimoku Kinko Hyo<br />(9,26,52)<br />Time: 2016.10.11 00:00<br />Chikou Span: 0.74786
        </Tooltip>
        <Pointer width="72" height="72" viewBox="0 0 72 72" fill="none" aria-hidden="true">
          <circle cx="35.5" cy="36" r="32" stroke="#eeee22" strokeWidth="3" />
          <path d="M35 37v15l3.500-3 2.500 5 2-1-2.300-5H45z" fill="#fff" stroke="#222" strokeWidth=".6" />
        </Pointer>

        <Palette aria-label="Strumenti di disegno">
          <PaletteHead>
            A.
            <PaletteClose aria-label="Chiudi strumenti"><Cross color="#fff" size={6} /></PaletteClose>
          </PaletteHead>
          <PaletteBody>
            {paletteTools.map((t, i) => (
              <PaletteTool key={t.name} aria-label={t.name} $pressed={i === 0}>
                <Icon>{t.art}</Icon>
                {t.menu && <Caret />}
              </PaletteTool>
            ))}
          </PaletteBody>
        </Palette>

        <Watermark>
          <MarkTop>RECORDED WITH</MarkTop>
          <MarkRow>
            SCREENCAST
            <Icon w={32} h={32}>
              <circle cx="16" cy="16" r="14" stroke="#1f3c55" strokeWidth="4" />
              <circle cx="16" cy="16" r="14" stroke="#4f8fc4" strokeWidth="3" />
              <circle cx="16" cy="15" r="6" fill="#4a9be0" />
            </Icon>
            MATIC
          </MarkRow>
        </Watermark>
      </Window>
    </>
  );
}
